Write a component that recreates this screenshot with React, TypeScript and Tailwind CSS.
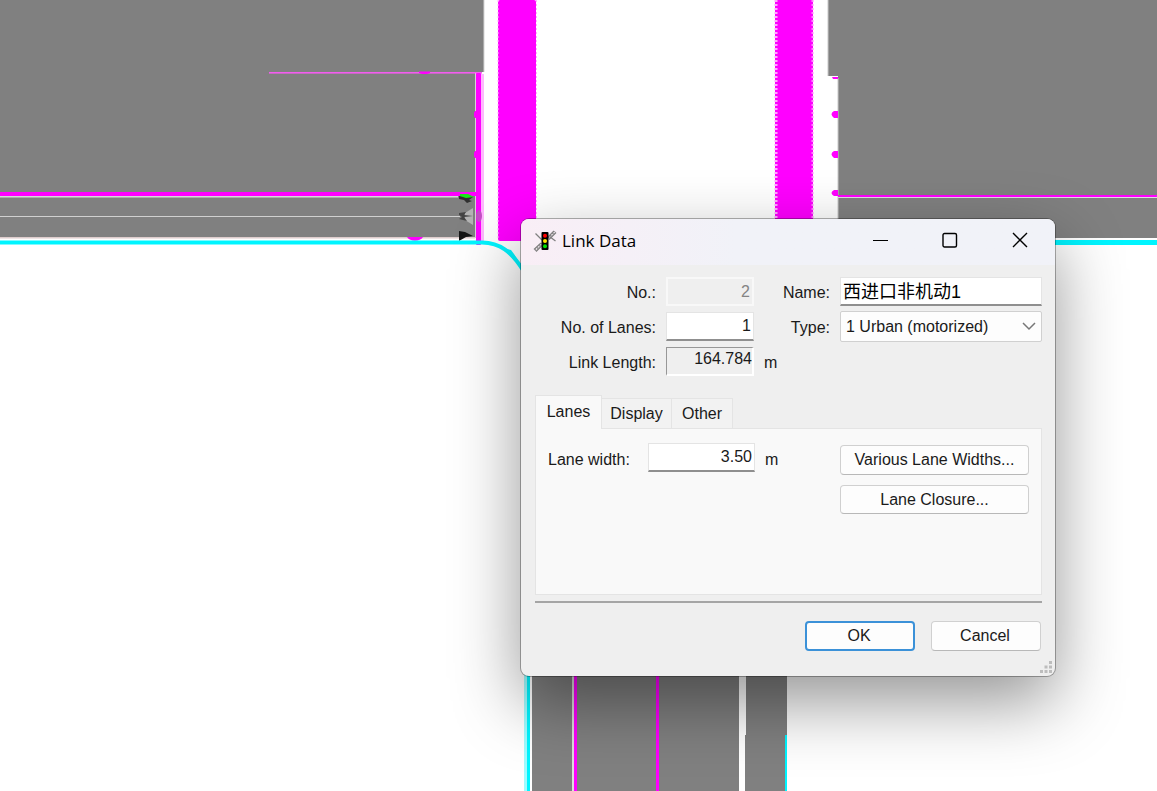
import { useState } from "react";

const MAGENTA = "#ff00ff";
const CYAN = "#00f5ff";
const ROAD = "#808080";

function NetworkMap() {
  return (
    <svg
      className="absolute inset-0 h-full w-full"
      viewBox="0 0 1157 791"
      preserveAspectRatio="xMinYMin slice"
      aria-hidden="true"
    >
      {/* west approach */}
      <path d="M0 0H484V72H475V238H0Z" fill={ROAD} />
      <path d="M475.5 74V238M484 0V72" stroke="#d5d5d5" fill="none" />
      <rect x="0" y="196" width="458" height="1.5" fill="#d8d8d8" />
      <rect x="0" y="216" width="460" height="1" fill="#d0d0d0" />
      <rect x="0" y="237" width="475" height="1.5" fill="#dcc" />
      <rect x="269" y="72" width="213" height="1.6" fill="#f45cf0" />
      <path d="M419 71.500h11v1.500l-3 1h-5l-3-1z" fill={MAGENTA} />
      <rect x="481" y="74" width="3" height="168" fill="#ffb5ff" />
      <rect x="476" y="73" width="5" height="172" rx="1" fill={MAGENTA} />
      <path d="M477 111h-2l-1 2v3l1 2h2zM477 151h-2l-1 2v3l1 2h2z" fill={MAGENTA} />
      <rect x="0" y="192" width="477" height="4" fill={MAGENTA} />
      <path d="M407 237h16c-3 5-13 5-16 0z" fill={MAGENTA} />

      {/* direction markers at the stop line */}
      <path d="M459 196l14 1-4 3 3 1-5 2-3-3-5-1z" fill="#303030" />
      <path d="M460 194h8l6 3-8 1-6-2z" fill="#16e816" />
      <path d="M473 208v17l-8-5v-7z" fill="#b4b4b4" />
      <path d="M459 213l7-1-2 3 9 1-9 1 3 4-8-2 3-2-3-2z" fill="#444" />
      <ellipse cx="479" cy="216" rx="3" ry="6" fill="#c64cc6" />
      <path d="M459 231l6 1 8 4-7 1-7 4z" fill="#151515" />

      {/* crossings */}
      <rect x="498" y="0" width="38" height="241" rx="2" fill={MAGENTA} />
      <path d="M498 0V239M536.500 0V239" stroke="#ffb5ff" strokeWidth="1" strokeDasharray="2 2" />
      <rect x="775" y="0" width="38" height="225" fill={MAGENTA} />
      <path d="M776 0V225" stroke="#ffa8ff" strokeWidth="3" strokeDasharray="2 2" />
      <path d="M812.500 0V225" stroke="#ff80ff" strokeWidth="2" strokeDasharray="2 2" />

      {/* kerb lines */}
      <path d="M0 242.500H482C500 243 511 251 523 270" stroke={CYAN} strokeWidth="4" fill="none" />
      <path d="M503 248l8 2 3 4 4 6-5-1z" fill={CYAN} />

      {/* east approach */}
      <path d="M828 0H1157V238H838V76H828Z" fill={ROAD} />
      <path d="M828 0V76M838 78V238" stroke="#c8c8c8" />
      <rect x="838" y="195" width="319" height="2" fill={MAGENTA} />
      <rect x="838" y="197" width="319" height="1" fill="#ddd" />
      <path
        d="M838 77h-6l1 2h5zM838 111h-4q-5 3 0 7h4zM838 151h-4q-5 3 0 7h4zM838 190h-4q-5 3 0 6h4z"
        fill={MAGENTA}
      />
      <rect x="1040" y="240" width="117" height="5" fill={CYAN} />

      {/* south approach */}
      <rect x="524" y="660" width="3" height="131" fill="#9ffcff" />
      <rect x="527" y="660" width="3" height="131" fill={CYAN} />
      <rect x="532" y="660" width="207" height="131" fill={ROAD} />
      <path d="M746 660H787V791H745V735H746Z" fill={ROAD} />
      <rect x="572" y="660" width="2" height="131" fill="#ddd" />
      <rect x="574" y="660" width="3" height="131" fill={MAGENTA} />
      <rect x="656" y="660" width="3" height="131" fill={MAGENTA} />
      <rect x="785" y="735" width="2" height="56" fill={CYAN} />
    </svg>
  );
}

function SignalIcon() {
  return (
    <svg className="h-6 w-6 shrink-0" viewBox="0 0 24 24" aria-hidden="true">
      <g stroke="#808080" strokeWidth="1.300" fill="none">
        <path d="M1 19.500L8 13M3 21.500L9 15.500M15 7L21 1M16 9.500L23 2.500" />
        <path d="M2 20.500L22 1.500" strokeDasharray="1.500 1.500" />
        <path d="M2.500 3.500L9 10M16.500 6.500L22.500 11" />
      </g>
      <rect x="8.500" y="2" width="7" height="18" rx="1" fill="#000" />
      <circle cx="12" cy="5.800" r="2" fill="#f00" />
      <circle cx="12" cy="11" r="2" fill="#ffe600" />
      <circle cx="12" cy="16.200" r="2" fill="#0d0" />
    </svg>
  );
}

const windowButton = "flex h-full w-[70px] items-center justify-center";
const textField =
  "h-[29px] w-full min-w-0 border border-[#e4e4e4] border-b-2 border-b-[#8f8f8f] bg-white px-0.5 text-right";
const pushButton =
  "flex items-center justify-center rounded border border-[#d0d0d0] border-b-[#b8b8b8] bg-[#fdfdfd]";

function TitleBar() {
  return (
    <header className="flex h-[46px] items-center rounded-t-lg bg-linear-to-r from-[#f9eef6] to-[#f1f2f8] to-40% pl-3">
      <SignalIcon />
      <h1 className="ml-[5px] flex-1 pb-0.5 font-['Open_Sans',sans-serif] text-[17px] leading-6 text-black">
        Link Data
      </h1>
      <div className="flex h-full items-center pb-1">
        <button type="button" aria-label="Minimize" className={windowButton}>
          <svg width="16" height="16" viewBox="0 0 16 16" stroke="#000">
            <path d="M1 8.500h15" />
          </svg>
        </button>
        <button type="button" aria-label="Maximize" className={windowButton}>
          <svg width="16" height="16" viewBox="0 0 16 16" stroke="#000" fill="none">
            <rect x="1" y="1.500" width="13.500" height="13.500" rx="1.500" strokeWidth="1.400" />
          </svg>
        </button>
        <button type="button" aria-label="Close" className={windowButton}>
          <svg width="16" height="16" viewBox="0 0 16 16" stroke="#000">
            <path d="M1 1l14 14M15 1L1 15" strokeWidth="1.400" />
          </svg>
        </button>
      </div>
    </header>
  );
}

function LinkForm() {
  return (
    <div className="grid auto-rows-[29px] grid-cols-[121px_88px_66px_1fr] items-center gap-x-2.5 gap-y-1.5">
      <label htmlFor="no" className="pt-0.5 text-right">No.:</label>
      <input
        id="no"
        disabled
        defaultValue="2"
        className="h-[29px] w-full min-w-0 border-2 border-[#f8f8f8] bg-[#efefef] px-0.5 text-right text-[#848484]"
      />
      <label htmlFor="name" className="pt-0.5 text-right">Name:</label>
      <input
        id="name"
        defaultValue="西进口非机动1"
        className="h-[29px] w-full min-w-0 border border-b-2 border-[#e4e4e4] border-b-[#8f8f8f] bg-white px-0.5 pb-0.5 font-['Liberation_Sans','Noto_Sans_CJK_SC',sans-serif] text-[18px] text-black"
      />

      <label htmlFor="lanes" className="pt-0.5 text-right">No. of Lanes:</label>
      <input id="lanes" defaultValue="1" className={textField} />
      <label htmlFor="type" className="pt-0.5 text-right">Type:</label>
      <div className="relative h-[31px]">
        <select
          id="type"
          className="h-full w-full appearance-none rounded-xs border border-[#d0d0d0] bg-[#fdfdfd] pl-[5px]"
        >
          <option>1 Urban (motorized)</option>
        </select>
        <svg
          className="pointer-events-none absolute top-2.5 right-1.5"
          width="14"
          height="10"
          viewBox="0 0 14 10"
          fill="none"
          stroke="#777"
          strokeWidth="1.500"
          aria-hidden="true"
        >
          <path d="M1 2l6 6 6-6" />
        </svg>
      </div>

      <label htmlFor="length" className="pt-0.5 text-right">Link Length:</label>
      <input
        id="length"
        readOnly
        defaultValue="164.784"
        className="h-[29px] w-full min-w-0 border border-r-2 border-b-2 border-t-[#979797] border-r-white border-b-white border-l-[#979797] bg-[#efefef] pb-1 text-right"
      />
      <span className="pt-0.5">m</span>
    </div>
  );
}

const tabs = [
  { name: "Lanes", width: "w-[67px]" },
  { name: "Display", width: "w-[70px]" },
  { name: "Other", width: "w-[61px]" },
];

function LaneTabs() {
  const [active, setActive] = useState("Lanes");
  return (
    <section className="mt-[19px]">
      <div role="tablist" className="flex items-end">
        {tabs.map(({ name, width }) => (
          <button
            key={name}
            type="button"
            role="tab"
            aria-selected={name === active}
            onClick={() => setActive(name)}
            className={`${width} ${
              name === active
                ? "z-10 -mb-px h-[34px] border border-b-0 bg-[#f9f9f9] pb-0.5"
                : "h-[30px] border border-b-0 border-l-0 bg-[#f2f2f2]"
            } border-[#e4e4e4]`}
          >
            {name}
          </button>
        ))}
      </div>
      <div
        role="tabpanel"
        aria-label={active}
        className="flex h-[167px] items-start justify-between border border-[#e4e4e4] bg-[#f9f9f9] px-3 py-3.5"
      >
        <div className="flex items-center">
          <label htmlFor="lane-width" className="w-[100px] pt-1">Lane width:</label>
          <div className="w-[107px]">
            <input id="lane-width" defaultValue="3.50" className={textField} />
          </div>
          <span className="ml-2.5 pt-1">m</span>
        </div>
        <div className="flex w-[189px] flex-col gap-2.5 pt-0.5">
          <button type="button" className={`${pushButton} h-[30px]`}>Various Lane Widths...</button>
          <button type="button" className={`${pushButton} h-[29px]`}>Lane Closure...</button>
        </div>
      </div>
    </section>
  );
}

function LinkDialog() {
  return (
    <div
      role="dialog"
      aria-label="Link Data"
      className="absolute top-[219px] left-[521px] w-[534px] rounded-lg bg-[#efefef] font-['Liberation_Sans',sans-serif] text-[16px] leading-5 text-[#1a1a1a] shadow-[0_0_0_1px_rgba(0,0,0,0.3),0_26px_68px_rgba(0,0,0,0.42)]"
    >
      <TitleBar />
      <div className="pt-3 pr-[13px] pb-[25px] pl-3.5">
        <LinkForm />
        <LaneTabs />
        <hr className="mt-1.5 border-t-2 border-[#a5a5a5]" />
        <div className="mt-[18px] flex justify-end gap-4 pr-px">
          <button
            type="button"
            className="flex h-[30px] w-[110px] items-center justify-center rounded border-2 border-[#3b91d8] bg-[#fdfdfd] pr-0.5"
          >
            OK
          </button>
          <button type="button" className={`${pushButton} h-[30px] w-[110px] pr-0.5`}>Cancel</button>
        </div>
      </div>
      <svg
        className="absolute right-0.5 bottom-0.5"
        width="13"
        height="13"
        viewBox="0 0 13 13"
        fill="#bdbdbd"
        aria-hidden="true"
      >
        <path d="M9 0h3v3H9zM9 4.500h3v3H9zM4.500 4.500h3v3h-3zM9 9h3v3H9zM4.500 9h3v3h-3zM0 9h3v3H0z" />
      </svg>
    </div>
  );
}

export default function App() {
  return (
    <main className="relative min-h-screen overflow-hidden bg-white">
      <NetworkMap />
      <LinkDialog />
    </main>
  );
}
